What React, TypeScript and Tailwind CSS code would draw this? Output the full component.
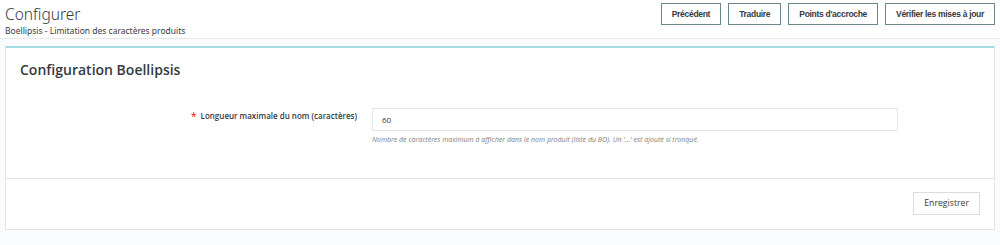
export default function App() {
  const actions = ['Précédent', 'Traduire', "Points d'accroche", 'Vérifier les mises à jour'];

  return (
    <div className="w-[1000px] h-[245px] bg-[#fafbfc] font-['Open_Sans',sans-serif] text-[#363a41]">
      {/* Toolbar header */}
      <div className="h-[39px] bg-white border-b border-[#e8e8e8] flex items-start justify-between pl-[5px] pr-[5px]">
        <div className="pt-[4px]">
          <h1 className="text-[15.5px] leading-[20px] font-light font-['Noto_Sans',sans-serif]">Configurer</h1>
          <p className="text-[8.5px] leading-[11px] mt-[1px] font-['Noto_Sans',sans-serif]">
            Boellipsis - Limitation des caractères produits
          </p>
        </div>
        <div className="flex gap-[7px] pt-[3px]">
          {actions.map((a) => (
            <button
              key={a}
              className="h-[22px] px-[10px] border border-[#6c868e] bg-white text-[8.5px] tracking-[-0.3px] font-bold font-['Liberation_Sans',sans-serif] text-[#363a41]"
            >
              {a}
            </button>
          ))}
        </div>
      </div>

      {/* Panel */}
      <div className="mx-[5px] mt-[7px] bg-white border border-[#e6e6e6] border-t-2 border-t-[#a8dbe8] w-[990px]">
        <div className="px-[14px] pt-[12px] pb-[25px]">
          <h2 className="text-[14px] leading-[20px] font-semibold">Configuration Boellipsis</h2>
        </div>
        <div className="flex items-start">
          <div className="w-[366px] pr-[15px] pt-[5px] flex justify-end items-center gap-[4px]">
            <span className="text-[#e00] text-[10px] leading-none">*</span>
            <label className="text-[8px] font-semibold">Longueur maximale du nom (caractères)</label>
          </div>
          <div className="w-[526px]">
            <input
              readOnly
              value="60"
              className="w-full h-[23px] border border-[#e5e5e5] px-[9px] text-[8px] text-[#363a41] outline-none"
            />
            <p className="mt-[4px] text-[7px] italic text-[#8a8a8a] font-['Noto_Sans',sans-serif]">
              Nombre de caractères maximum à afficher dans le nom produit (liste du BO). Un '...' est ajouté si tronqué.
            </p>
          </div>
        </div>
        <div className="h-[32px]" />
        <div className="border-t border-[#e6e6e6] h-[51px] flex items-center justify-end pr-[14px]">
          <button className="h-[23px] px-[10px] border border-[#dcdcdc] bg-white text-[8.7px] text-[#363a41]">
            Enregistrer
          </button>
        </div>
      </div>
    </div>
  );
}
